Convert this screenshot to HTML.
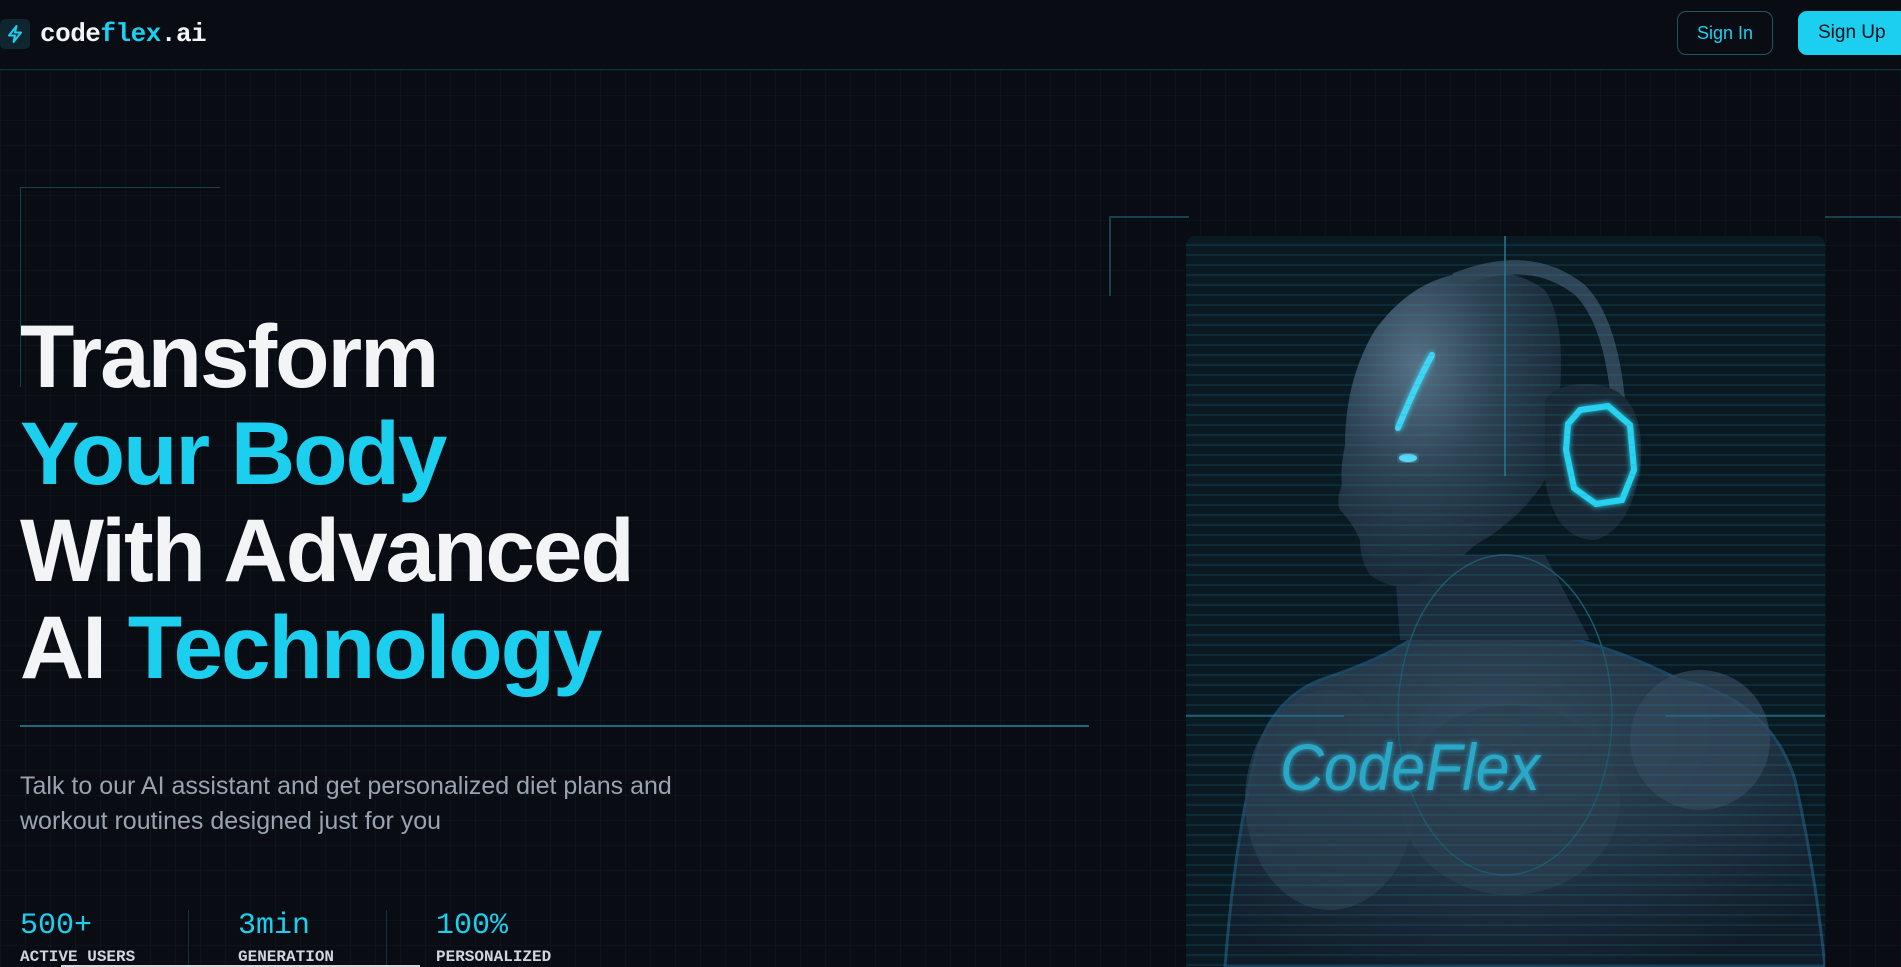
<!DOCTYPE html>
<html><head><meta charset="utf-8"><style>
*{margin:0;padding:0;box-sizing:border-box}
html,body{width:1901px;height:967px;overflow:hidden;background:#090c13}
body{position:relative;font-family:"Liberation Sans",sans-serif;
background-color:#090c13;
background-image:linear-gradient(rgba(34,211,238,0.04) 1px,transparent 1px),linear-gradient(90deg,rgba(34,211,238,0.04) 1px,transparent 1px);
background-size:25px 25px;background-position:0 70px}
.hdr{position:absolute;left:0;top:0;width:1901px;height:70px;background:#090c13;border-bottom:1px solid #12323d}
.abs{position:absolute}
.mono{font-family:"Liberation Mono",monospace}
h1{position:absolute;left:20px;top:308px;font-size:89px;line-height:97px;font-weight:bold;color:#f3f4f6;letter-spacing:-2px}
.c{color:#1ccfef}
</style></head><body>
<div class="hdr"></div>
<div class="abs" style="left:0;top:19px;width:30px;height:30px;background:#0f2631;border-radius:5px">
<svg width="30" height="30" viewBox="0 0 30 30"><path d="M16.5 7 L9 16.5 H15 L13.5 23 L21 13.5 H15 Z" fill="none" stroke="#1ccfef" stroke-width="2" stroke-linejoin="round"/></svg></div>
<div class="abs mono" style="left:40px;top:19px;font-size:26px;font-weight:bold;color:#f3f4f6;line-height:30px;letter-spacing:-0.5px">code<span class="c">flex</span>.ai</div>
<div class="abs" style="left:1677px;top:11px;width:96px;height:44px;border:1px solid #1b5566;border-radius:9px;color:#1ccfef;font-size:18px;text-align:center;line-height:42px">Sign In</div>
<div class="abs" style="left:1798px;top:11px;width:110px;height:44px;background:#1ccff0;border-radius:9px;color:#0a1118;font-size:19px;line-height:44px;padding-left:20px">Sign Up</div>

<div class="abs" style="left:20px;top:187px;width:200px;height:200px;border-top:1px solid #17414d;border-left:1px solid #17414d"></div>
<h1>Transform<br><span class="c">Your Body</span><br>With Advanced<br>AI <span class="c">Technology</span></h1>
<div class="abs" style="left:20px;top:725px;width:1069px;height:2px;background:#1a6a80"></div>
<div class="abs" style="left:20px;top:769px;font-size:25px;line-height:35px;color:#9aa3b0">Talk to our AI assistant and get personalized diet plans and<br>workout routines designed just for you</div>

<div class="abs mono c" style="left:20px;top:909px;font-size:30px">500+</div>
<div class="abs mono c" style="left:238px;top:909px;font-size:30px">3min</div>
<div class="abs mono c" style="left:436px;top:909px;font-size:30px">100%</div>
<div class="abs mono" style="left:20px;top:948px;font-size:16px;font-weight:bold;color:#d1d5db">ACTIVE USERS</div>
<div class="abs mono" style="left:238px;top:948px;font-size:16px;font-weight:bold;color:#d1d5db">GENERATION</div>
<div class="abs mono" style="left:436px;top:948px;font-size:16px;font-weight:bold;color:#d1d5db">PERSONALIZED</div>
<div class="abs" style="left:188px;top:910px;width:1px;height:57px;background:#16303a"></div>
<div class="abs" style="left:386px;top:910px;width:1px;height:57px;background:#16303a"></div>
<div class="abs" style="left:61px;top:965px;width:359px;height:2px;background:#d8dadc"></div>

<div class="abs" style="left:1109px;top:216px;width:80px;height:80px;border-top:2px solid #17414d;border-left:2px solid #17414d"></div>
<div class="abs" style="left:1825px;top:216px;width:80px;height:80px;border-top:2px solid #17414d"></div>

<div class="abs" style="left:1186px;top:236px;width:639px;height:731px;border-radius:9px 9px 0 0;overflow:hidden;background:#0a1a23">
<svg width="639" height="731" viewBox="1186 236 639 731" style="position:absolute;left:0;top:0">
<defs>
<radialGradient id="sk" cx="0.35" cy="0.3" r="0.8"><stop offset="0" stop-color="#566f82"/><stop offset="0.45" stop-color="#2c4152"/><stop offset="1" stop-color="#142230"/></radialGradient>
<radialGradient id="bd" cx="0.45" cy="0.3" r="0.75"><stop offset="0" stop-color="#33485a"/><stop offset="0.6" stop-color="#1f3142"/><stop offset="1" stop-color="#101c28"/></radialGradient>
<filter id="gl"><feGaussianBlur stdDeviation="3" result="b"/><feMerge><feMergeNode in="b"/><feMergeNode in="SourceGraphic"/></feMerge></filter>
</defs>
<path d="M1225 967 Q1235 840 1255 760 Q1270 700 1320 680 Q1380 660 1410 640 Q1460 625 1530 630 Q1600 640 1680 680 Q1770 700 1795 780 Q1815 870 1825 967 Z" fill="url(#bd)" stroke="#1a4560" stroke-width="3"/>
<ellipse cx="1330" cy="800" rx="85" ry="110" fill="#2b3f50" opacity="0.7"/>
<ellipse cx="1510" cy="800" rx="110" ry="95" fill="#2b3f50" opacity="0.7"/>
<ellipse cx="1700" cy="740" rx="70" ry="70" fill="#34495b" opacity="0.7"/>
<path d="M1400 640 L1395 570 L1450 555 L1545 555 L1590 640 Z" fill="#1c2e3d"/>
<path d="M1490 272 Q1420 268 1375 330 Q1345 380 1345 445 Q1340 470 1342 485 Q1336 500 1340 510 Q1352 522 1360 540 Q1360 560 1370 575 Q1390 590 1415 585 Q1450 570 1475 545 Q1520 520 1545 480 Q1560 440 1560 390 Q1565 320 1545 290 Q1520 272 1490 272 Z" fill="url(#sk)"/>
<path d="M1398 428 Q1418 380 1432 355" stroke="#3fd4f5" stroke-width="6" fill="none" stroke-linecap="round" filter="url(#gl)"/>
<ellipse cx="1408" cy="458" rx="9" ry="4" fill="#5ad6f5" filter="url(#gl)"/>
<path d="M1455 280 Q1530 250 1580 290 Q1610 320 1618 400" stroke="#2f4454" stroke-width="14" fill="none"/>
<path d="M1545 400 Q1560 380 1600 385 Q1648 395 1640 470 Q1630 530 1595 540 Q1555 540 1545 480 Z" fill="#1a2936"/>
<polygon points="1580,410 1608,406 1630,425 1634,470 1622,500 1596,504 1574,488 1566,450 1568,424" fill="none" stroke="#25d4f2" stroke-width="6" filter="url(#gl)"/>
<ellipse cx="1505" cy="715" rx="107" ry="160" fill="none" stroke="#1b5868" stroke-width="1.5"/>
<line x1="1186" y1="716" x2="1344" y2="716" stroke="#1d6a80" stroke-width="1.5"/>
<line x1="1666" y1="716" x2="1825" y2="716" stroke="#1d6a80" stroke-width="1.5"/>
<line x1="1505" y1="236" x2="1505" y2="476" stroke="#1f7a90" stroke-width="1.5"/>
<text x="1280" y="790" font-family="Liberation Sans, sans-serif" font-style="italic" font-size="66" fill="#2ba8c8" transform="translate(1280 0) scale(0.92 1) translate(-1280 0)" filter="url(#gl)">CodeFlex</text>
</svg>
<div style="position:absolute;inset:0;background:repeating-linear-gradient(180deg,transparent 0,transparent 8px,rgba(34,160,190,0.13) 8px,rgba(34,160,190,0.13) 10px)"></div>
</div>
</body></html>
